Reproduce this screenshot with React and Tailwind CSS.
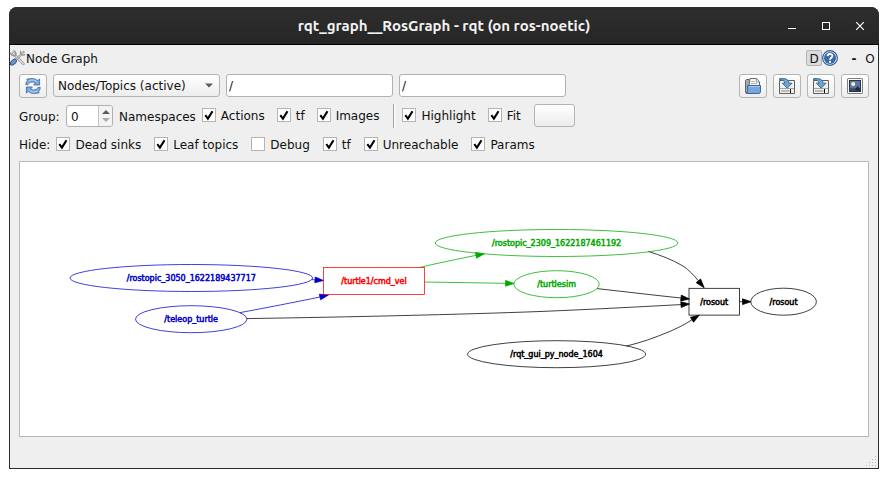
import React from "react";

const RAISED =
  "border border-[#b4b4b4] rounded-[3px] bg-linear-to-b from-white to-[#ededed]";

function IconButton({ label, children }) {
  return (
    <button
      type="button"
      aria-label={label}
      className={`${RAISED} flex h-6 w-7 shrink-0 items-center justify-center`}
    >
      {children}
    </button>
  );
}

function Check({ label, defaultChecked = true }) {
  return (
    <label className="flex h-[22px] shrink-0 items-start gap-[5px]">
      <span className="mt-1 grid size-3.5">
        <input
          type="checkbox"
          defaultChecked={defaultChecked}
          className="peer col-start-1 row-start-1 size-3.5 appearance-none border border-[#b4b4b4] bg-white"
        />
        <svg
          viewBox="0 0 14 14"
          className="pointer-events-none invisible col-start-1 row-start-1 size-3.5 peer-checked:visible"
        >
          <path
            d="M3.3 7.2 L5.9 10.6 L10.5 3.2"
            fill="none"
            stroke="#000"
            strokeWidth="2.1"
          />
        </svg>
      </span>
      <span className="leading-6">{label}</span>
    </label>
  );
}

function PathInput({ label }) {
  return (
    <input
      type="text"
      aria-label={label}
      defaultValue="/"
      className="h-[23px] w-[167px] min-w-0 rounded-[3px] border border-[#b0b0b0] bg-white px-0.5"
    />
  );
}

function ToolsIcon() {
  return (
    <svg viewBox="0 0 16 16" className="size-4 shrink-0">
      <path d="M3 3.2 L13.4 13.8" stroke="#8f918d" strokeWidth="2.6" strokeLinecap="round" />
      <path d="M3 3.2 L13.4 13.8" stroke="#efefed" strokeWidth="1.1" strokeLinecap="round" />
      <path
        d="M0.6 2.6 A3 3 0 0 0 5.6 5 A3 3 0 0 0 3.4 0.6"
        fill="none"
        stroke="#8a8c88"
        strokeWidth="1.2"
      />
      <path d="M13.6 2 L6 9.6" stroke="#8f918d" strokeWidth="2.2" strokeLinecap="round" />
      <path d="M13.6 2 L6 9.6" stroke="#f4f4f2" strokeWidth="0.9" strokeLinecap="round" />
      <path
        d="M11 0.8 A2.6 2.6 0 0 0 11.6 4.6 A2.6 2.6 0 0 0 15.2 4.2"
        fill="none"
        stroke="#8a8c88"
        strokeWidth="1.1"
      />
      <path
        d="M0.6 14.8 C0 12.4 1.6 10 4.4 9 C6.8 9.2 7 11.2 5.6 12.9 C4.4 14.6 2.2 15.6 0.6 14.8 Z"
        fill="#6f95c8"
        stroke="#204a87"
        strokeWidth="1"
      />
    </svg>
  );
}

function RefreshIcon() {
  return (
    <svg viewBox="0 0 16 16" className="size-4">
      <g fill="#7fa8da" stroke="#3465a4" strokeWidth="0.8" strokeLinejoin="round">
        <path d="M0.8 6.6 C0.8 5 1.4 3.6 2.4 2.6 L1.8 1.2 C6 0.2 10.4 0.2 12.6 2.6 L14.6 1 V7 H8.6 L10.4 5 C8.4 3.6 4.4 3.6 3 6.6 Z" />
        <path d="M15.2 9.4 C15.2 11 14.6 12.4 13.6 13.4 L14.2 14.8 C10 15.8 5.6 15.8 3.4 13.4 L1.4 15 V9 H7.4 L5.6 11 C7.6 12.4 11.6 12.4 13 9.4 Z" />
      </g>
      <path
        d="M3.4 3 C6.4 1.4 10 1.6 12 4 M12.6 13 C9.6 14.6 6 14.4 4 12"
        fill="none"
        stroke="#cfe0f4"
        strokeWidth="0.8"
      />
    </svg>
  );
}

function OpenIcon() {
  return (
    <svg viewBox="0 0 16 16" className="size-4">
      <path d="M0.5 14.5 V2.5 L1.5 1.5 H5 V14.5 Z" fill="#a9aba7" stroke="#5f615e" />
      <path d="M3.5 11 L5 0.5 H11.5 L14.5 3.8 V10 Z" fill="#f7f7f6" stroke="#6a6c69" strokeLinejoin="round" />
      <path d="M11.3 0.8 V4 H14.3" fill="#dcdcda" stroke="#8d8f8b" strokeWidth="0.8" />
      <path d="M6.2 3.5 H9.8 M6 5.5 H12" stroke="#b5b5b2" />
      <path
        d="M2.6 7.5 H15.5 V13.6 Q15.5 15.5 13.8 15.5 H1.4 Q2.6 14.6 2.6 12.6 Z"
        fill="#78a5da"
        stroke="#3465a4"
        strokeLinejoin="round"
      />
      <path d="M3.6 8.6 H14.4" stroke="#a9c8ec" />
    </svg>
  );
}

function SaveIcon() {
  return (
    <svg viewBox="0 0 16 16" className="size-4">
      <path d="M0.5 15.5 V2.5 H15.5 V15.5 Z" fill="#f1f1f0" stroke="#5f615e" strokeLinejoin="round" />
      <path d="M1 10.5 H15" stroke="#a4a6a2" />
      <path d="M2 12 H10.5 V14 H2 Z" fill="#b9bab7" />
      <path d="M11.5 11 V15" stroke="#111" />
      <path
        d="M0.6 0.6 H4.2 C8 0.6 9.8 2.4 10 5.2 H13 L8.2 10.2 L3.4 5.2 H6 C5.8 3 3.6 1.4 0.6 2.2 Z"
        fill="#6fa5cc"
        stroke="#2f6690"
        strokeWidth="0.9"
        strokeLinejoin="round"
      />
    </svg>
  );
}

function ImageIcon() {
  return (
    <svg viewBox="0 0 16 16" className="size-4">
      <rect x="0.5" y="0.5" width="15" height="15" rx="0.6" fill="#fafafa" stroke="#80827e" />
      <rect x="2.5" y="2.5" width="11" height="11" fill="#5c77a3" stroke="#27354f" />
      <path d="M3 10.2 H13 V13 H3 Z" fill="#3a4a68" />
      <circle cx="6.2" cy="6" r="2" fill="#f3f3cf" />
      <path d="M8 11.5 L10.6 8 L13 10.8 V12.4 H8.6 Z" fill="#232a36" />
    </svg>
  );
}

function HelpIcon() {
  return (
    <svg viewBox="0 0 16 16" className="size-4">
      <circle cx="8" cy="8" r="7.4" fill="#dfe8f4" stroke="#2f5a98" strokeWidth="1.1" />
      <circle cx="8" cy="8" r="6" fill="#3a68ab" />
      <path
        d="M5.6 6.1 C5.7 3.3 10.4 3.3 10.4 6 C10.4 7.8 8 7.8 8 9.8"
        fill="none"
        stroke="#fff"
        strokeWidth="1.8"
      />
      <rect x="7" y="10.9" width="2" height="1.9" fill="#fff" />
    </svg>
  );
}

const BLUE = "#0000cc";
const GREEN = "#00aa00";
const RED = "#ff0000";
const BLACK = "#000000";

const NODES = [
  { shape: "ellipse", label: "/rostopic_3050_1622189437717", cx: 171.3, cy: 116, rx: 121.3, color: BLUE },
  { shape: "ellipse", label: "/teleop_turtle", cx: 171.2, cy: 157.2, rx: 55.7, color: BLUE },
  { shape: "box", label: "/turtle1/cmd_vel", cx: 354, cy: 119, rx: 50.5, color: RED },
  { shape: "ellipse", label: "/rostopic_2309_1622187461192", cx: 536.6, cy: 81, rx: 121.3, color: GREEN },
  { shape: "ellipse", label: "/turtlesim", cx: 536.6, cy: 122.2, rx: 42.7, color: GREEN },
  { shape: "ellipse", label: "/rqt_gui_py_node_1604", cx: 536.6, cy: 192.2, rx: 89, color: BLACK },
  { shape: "box", label: "/rosout", cx: 694.2, cy: 139.7, rx: 25.2, color: BLACK },
  { shape: "ellipse", label: "/rosout", cx: 763.6, cy: 139.7, rx: 32.8, color: BLACK },
];

// Each edge is a curve ending at the base of its arrow head, and the head's tip.
const EDGES = [
  { d: "M292 117.6 L295 117.9", base: [295, 117.9], tip: [303.5, 118.5], color: BLUE },
  { d: "M220 150.6 C245 146 276 140 300 135", base: [300, 135], tip: [308.5, 133], color: BLUE },
  { d: "M400 105.4 C418 101 438 97 456 93.4", base: [456, 93.4], tip: [464.5, 91.7], color: GREEN },
  { d: "M404.5 120 L485.5 121.3", base: [485.5, 121.3], tip: [494, 121.5], color: GREEN },
  { d: "M227 156.6 C330 155 440 152.5 520 149.5 C580 147 625 144.5 661 142.6", base: [661, 142.6], tip: [669.5, 142], color: BLACK },
  { d: "M577 126.6 C604 129.6 634 133.2 661 136", base: [661, 136], tip: [669.5, 137], color: BLACK },
  { d: "M628.3 89.4 C641 93.5 652 97.5 663 104 C669 108 674 113.4 678.4 118.8", base: [678.4, 118.8], tip: [684.2, 125.8], color: BLACK },
  { d: "M606.5 184 C621 180.6 634 176 647 170.6 C656 167 665 162.4 672 157.8", base: [672, 157.8], tip: [679.2, 153.2], color: BLACK },
  { d: "M719.4 139.7 L722.5 139.7", base: [722.5, 139.7], tip: [731, 139.7], color: BLACK },
];

function headPoints([bx, by], [tx, ty]) {
  const length = Math.hypot(tx - bx, ty - by);
  const nx = (-(ty - by) / length) * 2.9;
  const ny = ((tx - bx) / length) * 2.9;
  return `${tx},${ty} ${bx + nx},${by + ny} ${bx - nx},${by - ny}`;
}

function Graph() {
  return (
    <svg viewBox="0 0 848 274" className="block h-auto w-full" role="img" aria-label="Node graph">
      {EDGES.map((e) => (
        <g key={e.d} stroke={e.color} strokeWidth="0.75">
          <path d={e.d} fill="none" />
          <polygon points={headPoints(e.base, e.tip)} fill={e.color} />
        </g>
      ))}
      {NODES.map((n) => (
        <g key={`${n.label}-${n.shape}`}>
          {n.shape === "box" ? (
            <rect
              x={n.cx - n.rx}
              y={n.cy - 13.4}
              width={n.rx * 2}
              height="26.8"
              fill="none"
              stroke={n.color}
              strokeWidth="0.75"
            />
          ) : (
            <ellipse cx={n.cx} cy={n.cy} rx={n.rx} ry="13.5" fill="none" stroke={n.color} strokeWidth="0.75" />
          )}
          <text
            x={n.cx}
            y={n.cy + 3}
            textAnchor="middle"
            fill={n.color}
            stroke={n.color}
            strokeWidth="0.5"
            className="font-['DejaVu_Sans',sans-serif] text-[8px]"
          >
            {n.label}
          </text>
        </g>
      ))}
    </svg>
  );
}

function TitleBar() {
  return (
    <header className="grid h-[38px] grid-cols-[1fr_auto_1fr] items-center rounded-t-lg border-b border-black bg-linear-to-b from-[#2e2e2e] to-[#262626]">
      <span />
      <h1 className="font-['Ubuntu','Noto_Sans',sans-serif] text-[15px] leading-5 font-bold text-[#f2f2f2]">
        rqt_graph__RosGraph - rqt (on ros-noetic)
      </h1>
      <div className="flex justify-end gap-2.5 pr-[7px]">
        <button type="button" aria-label="Minimize" className="size-6">
          <svg viewBox="0 0 24 24" className="size-6">
            <path d="M8 14.5 H16" stroke="#fff" />
          </svg>
        </button>
        <button type="button" aria-label="Maximize" className="size-6">
          <svg viewBox="0 0 24 24" className="size-6">
            <rect x="8.5" y="8.5" width="7" height="7" fill="none" stroke="#fff" />
          </svg>
        </button>
        <button type="button" aria-label="Close" className="size-6">
          <svg viewBox="0 0 24 24" className="size-6">
            <path d="M8.2 8.2 L15.8 15.8 M15.8 8.2 L8.2 15.8" stroke="#fff" strokeWidth="1.2" />
          </svg>
        </button>
      </div>
    </header>
  );
}

export default function App() {
  return (
    <div className="min-h-screen bg-white px-[9px] pt-[7px] font-['DejaVu_Sans',sans-serif] text-xs text-[#111]">
      <div className="rounded-t-lg bg-[#2b2b2b]">
        <TitleBar />
        <main className="mx-px bg-[#efefef]">
          <div className="flex h-[29px] items-start pt-[5px]">
            <ToolsIcon />
            <h2 className="leading-[18px]">Node Graph</h2>
            <div className="ml-auto flex">
              <button
                type="button"
                aria-label="Dock"
                className="size-4 rounded-[2px] border border-[#b4b4b4] bg-[#dcdcdc] leading-4"
              >
                D
              </button>
              <button type="button" aria-label="Help" className="mr-2 size-4">
                <HelpIcon />
              </button>
              <button type="button" className="size-4 leading-[18px] font-bold">
                -
              </button>
              <button type="button" className="size-4 leading-[18px]">
                O
              </button>
            </div>
          </div>

          <div className="flex flex-col gap-1.5 px-[9px]">
            <div className="flex h-6 items-start gap-1.5">
              <IconButton label="Refresh graph">
                <RefreshIcon />
              </IconButton>
              <div className="grid h-[23px] w-[167px] items-center">
                <select
                  aria-label="Graph type"
                  className={`${RAISED} col-start-1 row-start-1 h-[23px] w-full appearance-none pl-1`}
                >
                  <option>Nodes/Topics (active)</option>
                </select>
                <svg
                  viewBox="0 0 8 5"
                  className="pointer-events-none col-start-1 row-start-1 mr-[7px] h-[5px] w-2 justify-self-end"
                >
                  <path d="M0 0.5 H8 L4 4.5 Z" fill="#5a5a5a" />
                </svg>
              </div>
              <PathInput label="Node filter" />
              <PathInput label="Topic filter" />
              <div className="ml-auto flex gap-1.5">
                <IconButton label="Load dot graph">
                  <OpenIcon />
                </IconButton>
                <IconButton label="Save as dot graph">
                  <SaveIcon />
                </IconButton>
                <IconButton label="Save as SVG">
                  <SaveIcon />
                </IconButton>
                <IconButton label="Save as image">
                  <ImageIcon />
                </IconButton>
              </div>
            </div>

            <div className="flex h-[23px] items-start">
              <label htmlFor="group" className="w-[47px] leading-[26px]">
                Group:
              </label>
              <div className="mt-px flex h-[22px] w-[47px] rounded-[3px] border border-[#b0b0b0] bg-white">
                <input
                  id="group"
                  type="number"
                  defaultValue={0}
                  className="w-[31px] appearance-none pt-0.5 pl-1 [appearance:textfield] [&::-webkit-inner-spin-button]:appearance-none"
                />
                <div className="flex flex-1 flex-col items-center justify-center gap-1 rounded-r-[2px] border-l border-[#c4c4c4] bg-[#f3f3f3]">
                  <button type="button" aria-label="Increase" className="flex">
                    <svg viewBox="0 0 8 4" className="h-1 w-2">
                      <path d="M0 4 L4 0 L8 4 Z" fill="#5a5a5a" />
                    </svg>
                  </button>
                  <button type="button" aria-label="Decrease" className="flex">
                    <svg viewBox="0 0 8 4" className="h-1 w-2">
                      <path d="M0 0 L4 4 L8 0 Z" fill="#ababab" />
                    </svg>
                  </button>
                </div>
              </div>
              <span className="ml-1.5 leading-[26px]">Namespaces</span>
              <div className="ml-1.5 flex gap-3">
                <Check label="Actions" />
                <Check label="tf" />
                <Check label="Images" />
              </div>
              <div className="mr-[7px] ml-3.5 h-6 w-0.5 border-r border-l border-r-white border-l-[#a0a0a0]" />
              <div className="flex gap-3">
                <Check label="Highlight" />
                <Check label="Fit" />
              </div>
              <button type="button" aria-label="Fit in view" className={`${RAISED} ml-[13px] h-[23px] w-[41px]`} />
            </div>

            <div className="flex h-[22px] items-start gap-[13px]">
              <div className="flex gap-1.5">
                <span className="leading-6">Hide:</span>
                <Check label="Dead sinks" />
              </div>
              <Check label="Leaf topics" />
              <Check label="Debug" defaultChecked={false} />
              <Check label="tf" />
              <Check label="Unreachable" />
              <Check label="Params" />
            </div>

            <div className="border border-[#b8b8b8] bg-white">
              <Graph />
            </div>
          </div>

          <div className="flex h-[31px] items-end justify-end pr-0.5 pb-0.5">
            <svg viewBox="0 0 10 10" className="size-2.5" fill="#b4b4b4">
              <path d="M9 0h1v1h-1z M6 3h1v1h-1z M9 3h1v1h-1z M3 6h1v1h-1z M6 6h1v1h-1z M9 6h1v1h-1z M0 9h1v1h-1z M3 9h1v1h-1z M6 9h1v1h-1z M9 9h1v1h-1z" />
            </svg>
          </div>
        </main>
        <div className="h-px" />
      </div>
    </div>
  );
}
